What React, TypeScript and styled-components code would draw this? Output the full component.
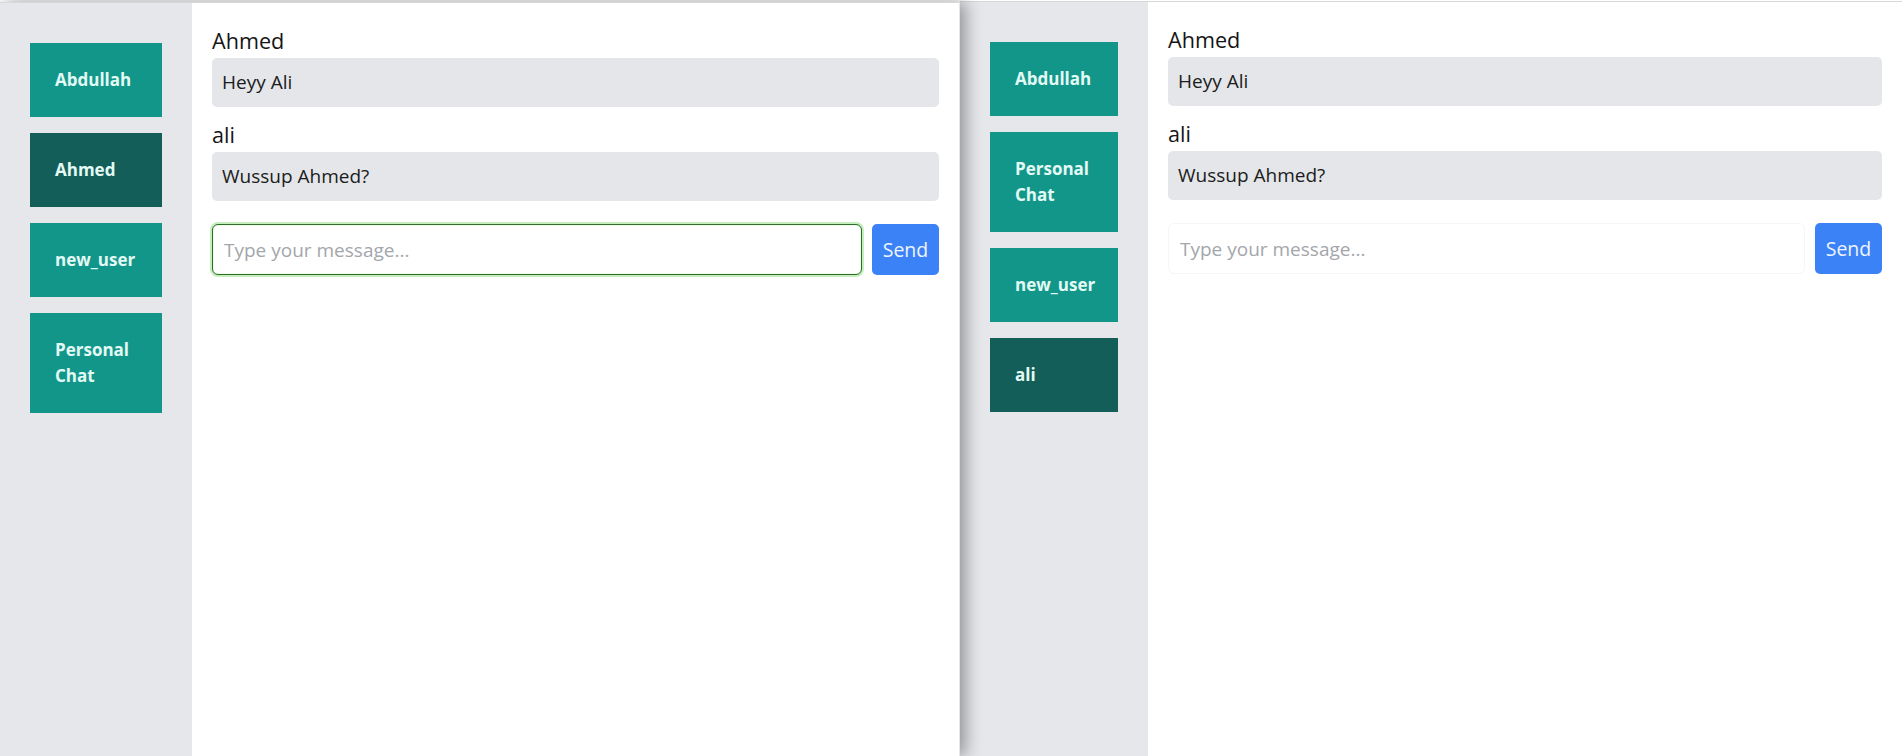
import React from "react";
import styled, { createGlobalStyle, css } from "styled-components";

const GlobalStyle = createGlobalStyle`
  html, body { margin: 0; padding: 0; background: #ffffff; }
  body { font-family: "Open Sans", "Noto Sans", "Liberation Sans", sans-serif; }
  * { box-sizing: border-box; }
`;

const Screen = styled.div`
  display: flex;
  width: 1902px;
  height: 756px;
  overflow: hidden;
  background: #ffffff;
`;

const Window = styled.div<{ $width: number; $top: number; $front?: boolean }>`
  flex: none;
  display: flex;
  width: ${(p) => p.$width}px;
  margin-top: ${(p) => p.$top}px;
  height: calc(756px - ${(p) => p.$top}px);
  border-top: 1px solid #d7d8da;
  background: #ffffff;
  ${(p) =>
    p.$front &&
    css`
      position: relative;
      z-index: 1;
      border-right: 1px solid #e6e6e6;
      box-shadow: 5px 0 16px rgba(0, 0, 0, 0.38);
    `}
`;

const Sidebar = styled.nav<{ $width: number; $btnWidth: number }>`
  flex: none;
  width: ${(p) => p.$width}px;
  background: #e5e7eb;
  padding: 40px 0 0 30px;
  display: flex;
  flex-direction: column;
  gap: 16px;
  & > button {
    width: ${(p) => p.$btnWidth}px;
  }
`;

const ChatButton = styled.button<{ $active?: boolean }>`
  display: block;
  border: none;
  border-radius: 0;
  margin: 0;
  padding: 24px 14px 24px 25px;
  text-align: left;
  font-family: "Open Sans", "Noto Sans", sans-serif;
  font-weight: 700;
  font-size: 17px;
  line-height: 26px;
  color: #e3faf5;
  background: ${(p) => (p.$active ? "#135e58" : "#12968a")};
  cursor: pointer;
`;

const ChatPane = styled.main`
  flex: 1;
  min-width: 0;
  padding: 22px 20px 0 20px;
  display: flex;
  flex-direction: column;
`;

const Message = styled.div`
  display: flex;
  flex-direction: column;
  margin-bottom: 12px;
`;

const Sender = styled.div`
  font-size: 21.6px;
  line-height: 32px;
  color: #151515;
  margin-bottom: 1px;
`;

const Bubble = styled.div`
  background: #e5e6e9;
  border-radius: 5px;
  padding: 10px 10px;
  font-size: 19px;
  line-height: 29px;
  color: #1a1c20;
`;

const Composer = styled.form`
  display: flex;
  align-items: stretch;
  gap: 10px;
  margin-top: 11px;
  height: 51px;
`;

const MessageInput = styled.input<{ $focused?: boolean }>`
  flex: 1;
  min-width: 0;
  font-family: "Open Sans", "Noto Sans", sans-serif;
  font-size: 19px;
  padding: 0 11px;
  color: #1a1c20;
  caret-color: #111;
  outline: none;
  border-radius: 6px;
  background: #ffffff;
  border: ${(p) => (p.$focused ? "1.5px solid #2f6b2b" : "1px solid #f5f6f7")};
  box-shadow: ${(p) => (p.$focused ? "0 0 0 2px #c4efbd, inset 0 0 2px #c4efbd" : "none")};
  &::placeholder {
    color: #a3a6ab;
  }
`;

const SendButton = styled.button`
  flex: none;
  width: 67px;
  border: none;
  border-radius: 5px;
  background: #3b82f6;
  color: #eef4ff;
  font-family: "Open Sans", "Noto Sans", sans-serif;
  font-size: 19.5px;
  padding: 0;
  cursor: pointer;
`;

type ChatItem = { name: string; active?: boolean };

const messages = [
  { sender: "Ahmed", text: "Heyy Ali" },
  { sender: "ali", text: "Wussup Ahmed?" },
];

function ChatWindow(props: {
  width: number;
  top: number;
  sidebarWidth: number;
  btnWidth: number;
  chats: ChatItem[];
  focused?: boolean;
  front?: boolean;
}) {
  return (
    <Window $width={props.width} $top={props.top} $front={props.front}>
      <Sidebar $width={props.sidebarWidth} $btnWidth={props.btnWidth}>
        {props.chats.map((c) => (
          <ChatButton key={c.name} $active={c.active}>
            {c.name}
          </ChatButton>
        ))}
      </Sidebar>
      <ChatPane>
        {messages.map((m, i) => (
          <Message key={i}>
            <Sender>{m.sender}</Sender>
            <Bubble>{m.text}</Bubble>
          </Message>
        ))}
        <Composer onSubmit={(e) => e.preventDefault()}>
          <MessageInput
            $focused={props.focused}
            autoFocus={props.focused}
            placeholder="Type your message..."
          />
          <SendButton type="submit">Send</SendButton>
        </Composer>
      </ChatPane>
    </Window>
  );
}

export default function App() {
  return (
    <>
      <GlobalStyle />
      <Screen>
        <ChatWindow
          width={960}
          top={2}
          sidebarWidth={192}
          btnWidth={132}
          front
          focused
          chats={[
            { name: "Abdullah" },
            { name: "Ahmed", active: true },
            { name: "new_user" },
            { name: "Personal Chat" },
          ]}
        />
        <ChatWindow
          width={942}
          top={1}
          sidebarWidth={188}
          btnWidth={128}
          chats={[
            { name: "Abdullah" },
            { name: "Personal Chat" },
            { name: "new_user" },
            { name: "ali", active: true },
          ]}
        />
      </Screen>
    </>
  );
}
